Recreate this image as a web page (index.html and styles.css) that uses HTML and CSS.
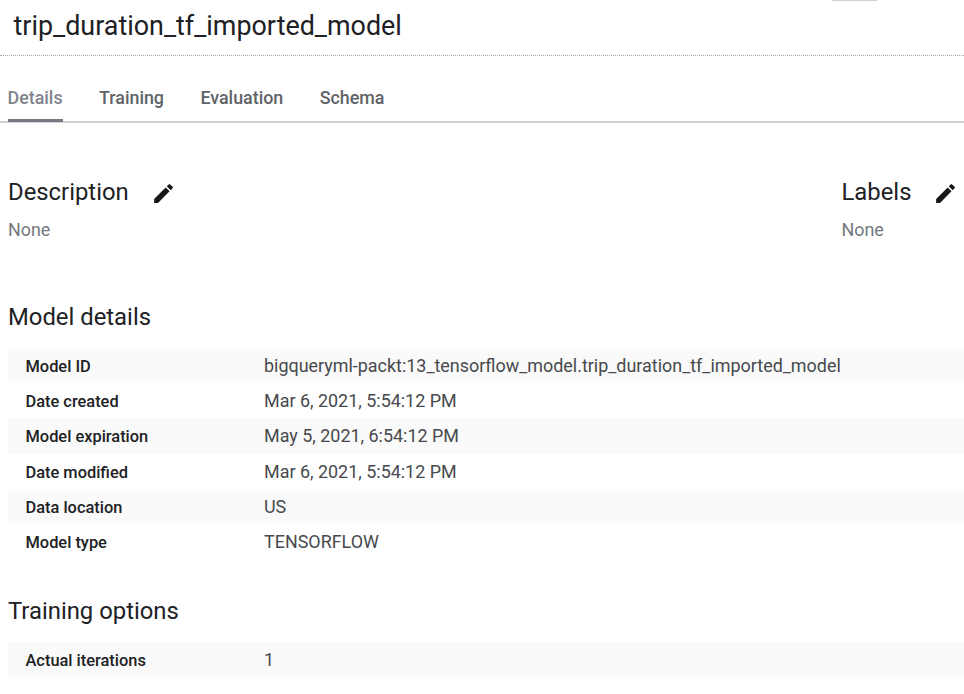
FILE: index.html
```html
<!DOCTYPE html>
<html lang="en">
<head>
<meta charset="utf-8">
<title>trip_duration_tf_imported_model</title>
<link rel="stylesheet" href="styles.css">
</head>
<body>
<header class="page-header">
  <h1 class="page-title">trip_duration_tf_imported_model</h1>
  <span class="toolbar-edge"></span>
</header>
<nav class="tabs">
  <a class="tab tab-active">Details</a>
  <a class="tab">Training</a>
  <a class="tab">Evaluation</a>
  <a class="tab">Schema</a>
</nav>
<main class="content">
  <div class="summary">
    <section class="description">
      <h2 class="heading heading-edit">Description
        <svg class="pencil" viewBox="0 0 24 24"><path d="M3 17.25V21h3.75L17.81 9.94l-3.75-3.75L3 17.25zM20.71 7.04a1 1 0 0 0 0-1.41l-2.34-2.34a1 1 0 0 0-1.41 0l-1.83 1.83 3.75 3.75 1.83-1.83z"/></svg>
      </h2>
      <p class="empty">None</p>
    </section>
    <section class="labels">
      <h2 class="heading heading-edit">Labels
        <svg class="pencil" viewBox="0 0 24 24"><path d="M3 17.25V21h3.75L17.81 9.94l-3.75-3.75L3 17.25zM20.71 7.04a1 1 0 0 0 0-1.41l-2.34-2.34a1 1 0 0 0-1.41 0l-1.83 1.83 3.75 3.75 1.83-1.83z"/></svg>
      </h2>
      <p class="empty">None</p>
    </section>
  </div>
  <section class="model-details">
    <h2 class="heading">Model details</h2>
    <dl class="table">
      <div class="row"><dt>Model ID</dt><dd>bigqueryml-packt:13_tensorflow_model.trip_duration_tf_imported_model</dd></div>
      <div class="row"><dt>Date created</dt><dd>Mar 6, 2021, 5:54:12 PM</dd></div>
      <div class="row"><dt>Model expiration</dt><dd>May 5, 2021, 6:54:12 PM</dd></div>
      <div class="row"><dt>Date modified</dt><dd>Mar 6, 2021, 5:54:12 PM</dd></div>
      <div class="row"><dt>Data location</dt><dd>US</dd></div>
      <div class="row"><dt>Model type</dt><dd>TENSORFLOW</dd></div>
    </dl>
  </section>
  <section class="training-options">
    <h2 class="heading">Training options</h2>
    <dl class="table">
      <div class="row"><dt>Actual iterations</dt><dd>1</dd></div>
    </dl>
  </section>
</main>
</body>
</html>
```
FILE: styles.css
```css
* { box-sizing: border-box; }

body {
  margin: 0;
  height: 694px;
  overflow: hidden;
  background: #fff;
  color: #202124;
  font-family: Roboto, sans-serif;
}

h1, h2, p, dl, dd { margin: 0; font-weight: 400; }

.page-header {
  position: relative;
  height: 56px;
  padding-left: 13.5px;
  border-bottom: 1px dotted #aaa;
}

.page-title { font-size: 26.9px; line-height: 52px; }

.toolbar-edge {
  position: absolute;
  top: 0;
  left: 832px;
  width: 45px;
  height: 1px;
  background: #d0d0d0;
}

.tabs {
  display: flex;
  gap: 36.4px;
  height: 67px;
  padding-left: 7.5px;
  border-bottom: 2px solid #d0d0d0;
}

.tab {
  height: 65.5px;
  padding-top: 30px;
  color: #5f6368;
  font-size: 17.88px;
  font-weight: 500;
  line-height: 24px;
}

.tab-active { color: #80838b; border-bottom: 3px solid #777982; }

.content { padding-left: 8px; }

.summary { display: flex; padding-top: 53px; }
.description { width: 833.5px; }

.heading { font-size: 23.85px; line-height: 33px; white-space: nowrap; }
.heading-edit { display: flex; align-items: center; gap: 22px; }

.pencil { width: 25px; height: 25px; margin-top: 2px; fill: #17181a; }

.empty { margin-top: 9px; color: #74777e; font-size: 17.9px; line-height: 24px; }

.model-details { margin-top: 59px; }
.training-options { margin-top: 35.5px; }

.table { margin-top: 14.2px; }

.row {
  display: flex;
  height: 35.15px;
  padding-left: 17.5px;
  line-height: 36px;
}

.row:nth-child(odd) { background: #fafafa; }

.row dt { width: 238.5px; padding-top: 1px; font-size: 16.4px; font-weight: 500; }
.row dd { color: #47494d; font-size: 17.93px; }
```
